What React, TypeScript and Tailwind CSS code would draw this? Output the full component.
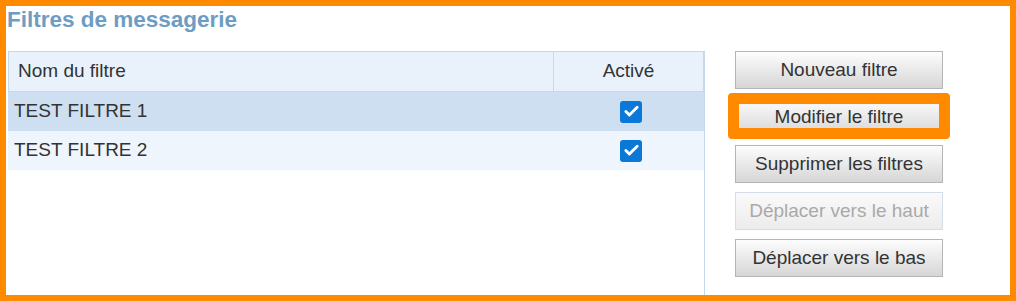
import { Check } from 'lucide-react';

type Filter = { name: string; active: boolean };

const filters: Filter[] = [
  { name: 'TEST FILTRE 1', active: true },
  { name: 'TEST FILTRE 2', active: true },
];

function Checkbox({ checked }: { checked: boolean }) {
  return (
    <span className="w-[22px] h-[22px] rounded-[3px] bg-[#0b78d7] flex items-center justify-center">
      {checked && <Check size={17} strokeWidth={4} className="text-white" />}
    </span>
  );
}

function Btn({ label, disabled, highlight }: { label: string; disabled?: boolean; highlight?: boolean }) {
  return (
    <div className="relative">
      <button
        className={
          disabled
            ? 'w-[208px] h-[38px] border border-[#d3deea] bg-gradient-to-b from-[#fafafa] to-[#ececec] text-[#a9a9a9] text-[19px]'
            : 'w-[208px] h-[38px] border border-[#b5b5b5] bg-gradient-to-b from-[#fdfdfd] to-[#d6d6d6] text-[#333] text-[19px]'
        }
      >
        {label}
      </button>
      {highlight && (
        <div className="absolute -left-[7px] -right-[7px] -top-[5px] -bottom-[3px] border-[11px] border-[#ff8a00] rounded-[4px]" />
      )}
    </div>
  );
}

export default function App() {
  return (
    <div className="w-[1016px] h-[301px] border-[6px] border-[#ff8a00] bg-white flex flex-col font-['Liberation_Sans',Arial,sans-serif]">
      <h1 className="text-[22.5px] leading-[26px] font-bold text-[#6d9cc4] pl-[1px] pt-[1px]">Filtres de messagerie</h1>

      <div className="flex flex-1 min-h-0 mt-[18px] pl-[2px]">
        {/* Filter list */}
        <div className="w-[697px] border-r border-[#c6d9ea] flex flex-col">
          <div className="flex h-[41px] bg-[#e9f2fb] border border-[#c9d8e7] text-[19px] text-[#333]">
            <div className="flex-1 flex items-center pl-[9px] border-r border-[#c9d8e7]">Nom du filtre</div>
            <div className="w-[149px] flex items-center justify-center">Activé</div>
          </div>
          {filters.map((f, i) => (
            <div
              key={f.name}
              className={`flex h-[39px] text-[19px] text-[#333] ${i === 0 ? 'bg-[#cddff0]' : 'bg-[#eef5fc]'}`}
            >
              <div className="flex-1 flex items-center pl-[6px]">{f.name}</div>
              <div className="w-[150px] flex items-center justify-center pl-[4px]">
                <Checkbox checked={f.active} />
              </div>
            </div>
          ))}
        </div>

        {/* Actions */}
        <div className="flex flex-col gap-[9px] pl-[30px]">
          <Btn label="Nouveau filtre" />
          <Btn label="Modifier le filtre" highlight />
          <Btn label="Supprimer les filtres" />
          <Btn label="Déplacer vers le haut" disabled />
          <Btn label="Déplacer vers le bas" />
        </div>
      </div>
    </div>
  );
}
